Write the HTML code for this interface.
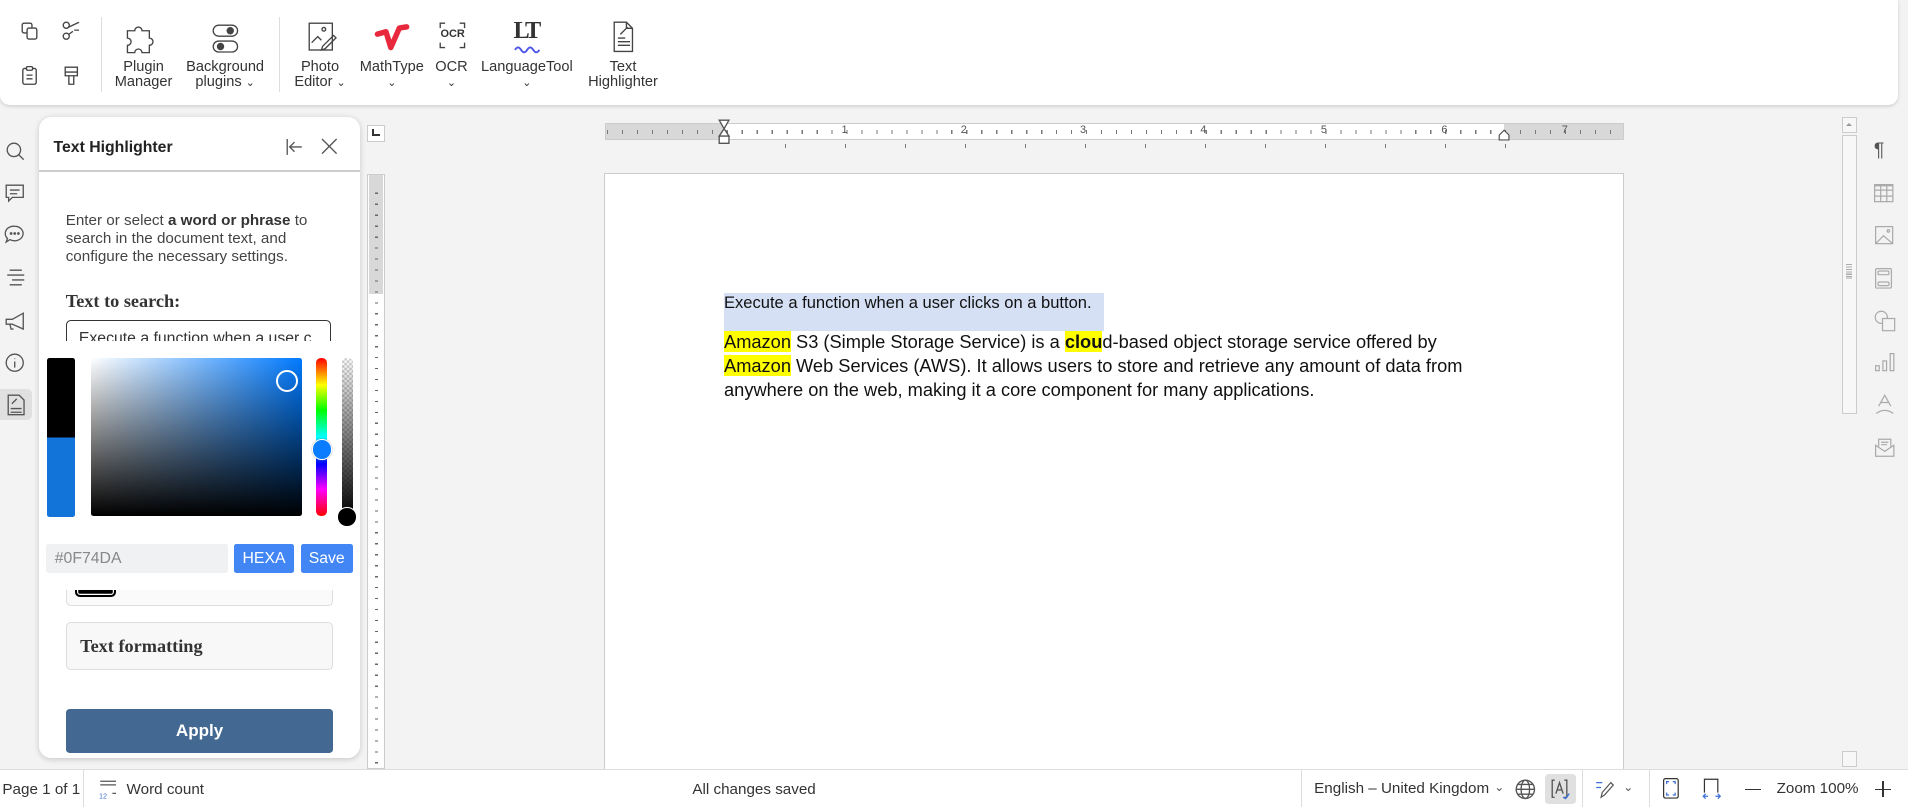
<!DOCTYPE html>
<html><head><meta charset="utf-8"><style>
*{box-sizing:border-box;margin:0;padding:0}
html,body{width:1908px;height:807px;overflow:hidden;background:#f3f3f3}
#r{zoom:1.21684;width:1568px;height:663px;position:relative;font-family:"Liberation Sans",Arial,sans-serif;color:#222;overflow:hidden}
.a{position:absolute}
.tb{left:0;top:0;width:1560px;height:86px;background:#fff;border-radius:0 0 8px 8px;box-shadow:0 1px 3px rgba(0,0,0,.15)}
.lbl{position:absolute;font-size:12px;line-height:13px;text-align:center;color:#333;white-space:nowrap;transform:translateX(-50%)}
.sep{position:absolute;width:1px;background:#ddd}
svg{position:absolute;overflow:visible}
.ic{fill:none;stroke:#444;stroke-width:1.1}
.ri{fill:none;stroke:#aaa;stroke-width:1}
.li{fill:none;stroke:#555;stroke-width:1.1}
.rn{position:absolute;top:102px;font-size:9px;color:#555;transform:translateX(-50%)}
</style></head><body><div id="r">
<div class="a tb"></div>
<svg style="left:17px;top:18px" width="16" height="16" class="ic"><rect x="1" y="1" width="8" height="8" rx="1.5"/><rect x="5" y="5" width="8" height="9" rx="1.5" fill="#fff"/></svg>
<svg style="left:51px;top:17px" width="16" height="16" class="ic"><circle cx="3.5" cy="3.5" r="2.5"/><circle cx="3.5" cy="12.5" r="2.5"/><path d="M5.5 5 L14 1 M5.5 11 L9 8.5 M10 7.5 L14 7.5"/></svg>
<svg style="left:17px;top:54px" width="16" height="16" class="ic"><rect x="1.5" y="2" width="11" height="13" rx="1.5"/><rect x="4.5" y="0.5" width="5" height="3" rx="1" fill="#fff"/><path d="M4.5 7.5h5M4.5 10.5h5"/></svg>
<svg style="left:53px;top:54px" width="14" height="16" class="ic"><path d="M1 1h10v7H1z M1 5h10 M4 8v7h4V8"/></svg>
<div class="sep" style="left:83px;top:14px;height:62px"></div>
<svg style="left:103px;top:17px" width="30" height="30" class="ic" stroke-width="1.1"><path d="M2 8h6a3 3 0 1 1 6 0h6v6a3 3 0 1 1 0 6v6h-6a3 3 0 1 0-6 0H2v-6a3 3 0 1 0 0-6z"/></svg>
<div class="lbl" style="left:118px;top:47px;top:49px">Plugin<br>Manager</div>
<svg style="left:174px;top:20px" width="24" height="26" class="ic"><rect x="1" y="1" width="20" height="9" rx="4.5"/><rect x="1" y="14" width="20" height="9" rx="4.5"/><circle cx="15" cy="5.5" r="2.5" fill="#444"/><circle cx="7" cy="18.5" r="2.5" fill="#444"/></svg>
<div class="lbl" style="left:185px;top:49px">Background<br>plugins <span style="font-size:9px">⌄</span></div>
<div class="sep" style="left:229px;top:14px;height:62px"></div>
<svg style="left:253px;top:18px" width="24" height="26" class="ic"><rect x="1" y="1" width="19" height="22"/><circle cx="13" cy="6" r="1.5"/><path d="M3 17l5-5 3 3M12 20l9-9 2 2-9 9-3 1z"/></svg>
<div class="lbl" style="left:263px;top:49px">Photo<br>Editor <span style="font-size:9px">⌄</span></div>
<svg style="left:308px;top:18px" width="28" height="26"><path d="M2 10 L9 8 L13 21 L20 5 L26 4" fill="none" stroke="#e8283c" stroke-width="4.5" stroke-linejoin="round" stroke-linecap="round"/></svg>
<div class="lbl" style="left:322px;top:49px">MathType<br><span style="font-size:9px">⌄</span></div>
<svg style="left:361px;top:18px" width="22" height="22" class="ic" stroke-width="1.6"><path d="M1 5V1h4M17 1h4v4M21 17v4h-4M5 21H1v-4"/></svg>
<div class="a" style="left:362px;top:23px;font-size:9px;font-weight:bold;color:#333">OCR</div>
<div class="lbl" style="left:371px;top:49px">OCR<br><span style="font-size:9px">⌄</span></div>
<div class="a" style="left:422px;top:14px;font-size:20px;font-weight:bold;font-family:'Liberation Serif',serif;color:#333;letter-spacing:-2px">LT</div>
<svg style="left:423px;top:37px" width="20" height="6"><path d="M0 4 Q2.5 0 5 4 T10 4 T15 4 T20 4" fill="none" stroke="#4c56e8" stroke-width="1.6"/></svg>
<div class="lbl" style="left:433px;top:49px">LanguageTool<br><span style="font-size:9px">⌄</span></div>
<svg style="left:504px;top:17px" width="18" height="26" class="ic"><path d="M1 1h10l5 5v19H1z M11 1v5h5 M4 17h10M4 20h10M4 14h6M6 11l6-6"/></svg>
<div class="lbl" style="left:512px;top:49px">Text<br>Highlighter</div>

<svg style="left:5px;top:117px" width="16" height="16" class="li"><circle cx="6.5" cy="6.5" r="5.5"/><path d="M10.5 10.5l4 4"/></svg>
<svg style="left:4px;top:151px" width="16" height="16" class="li"><path d="M1 1h14v10H6l-3 3v-3H1z M4 5h8M4 8h6"/></svg>
<svg style="left:4px;top:185px" width="16" height="16" class="li"><path d="M8 1a7 6 0 1 1-4 11l-3 2 1-3A7 6 0 0 1 8 1z"/><circle cx="5" cy="7" r=".6"/><circle cx="8" cy="7" r=".6"/><circle cx="11" cy="7" r=".6"/></svg>
<svg style="left:5px;top:221px" width="16" height="16" class="li"><path d="M3 1h10M1 5h14M5 9h10M3 13h10"/></svg>
<svg style="left:4px;top:256px" width="18" height="16" class="li"><path d="M1 6h5l9-5v13L6 10H1z M4 10l1 4h2"/></svg>
<svg style="left:4px;top:290px" width="16" height="16" class="li"><circle cx="8" cy="8" r="7"/><path d="M8 7v5M8 4.5v.5"/></svg>
<div class="a" style="left:0;top:320px;width:26px;height:25px;background:#e0e0e0;border-radius:0 4px 4px 0"></div>
<svg style="left:6px;top:324px" width="16" height="18" class="li"><path d="M1 1h9l4 4v12H1z M3 12h9M3 15h9M4 8l4-4"/></svg>

<div class="a" style="left:32px;top:96px;width:264px;height:527px;background:#fff;border-radius:10px;box-shadow:0 1px 5px rgba(0,0,0,.18)"></div>
<div class="a" style="left:44px;top:114px;font-size:13px;font-weight:bold;color:#222">Text Highlighter</div>
<svg style="left:235px;top:114px" width="14" height="13" class="li"><path d="M1 0v13M13 6.5H3M7 2.5l-4 4 4 4"/></svg>
<svg style="left:265px;top:114px" width="12" height="12" class="li"><path d="M0 0l12 12M12 0L0 12"/></svg>
<div class="a" style="left:32px;top:140px;width:264px;height:1px;background:#ccc"></div>
<div class="a" style="left:54px;top:174px;width:225px;font-size:12.5px;line-height:15px;color:#444">Enter or select <b style="color:#333">a word or phrase</b> to search in the document text, and configure the necessary settings.</div>
<div class="a" style="left:54px;top:239px;font-size:15px;font-weight:bold;font-family:'Liberation Serif',serif;color:#333">Text to search:</div>
<div class="a" style="left:54px;top:263px;width:218px;height:30px;border:1.5px solid #333;border-radius:4px;overflow:hidden;font-size:13px;padding:7px 10px;white-space:nowrap;color:#333">Execute a function when a user c</div>
<div class="a" style="left:54px;top:470px;width:220px;height:28px;border:1px solid #ddd;border-radius:4px;background:#fafafa"></div>
<div class="a" style="left:62px;top:474px;width:33px;height:17px;border:2px solid #000;border-radius:4px;background:#000;box-shadow:inset 0 0 0 1px #fff"></div>
<div class="a" style="left:54px;top:511px;width:220px;height:40px;border:1px solid #ddd;border-radius:4px;background:#f8f8f8;font-family:'Liberation Serif',serif;font-weight:bold;font-size:15px;color:#333;padding:11px 11px">Text formatting</div>
<div class="a" style="left:54px;top:583px;width:220px;height:36px;border-radius:3px;background:#436891;color:#fff;font-weight:bold;font-size:14px;text-align:center;line-height:36px">Apply</div>
<div class="a" style="left:32px;top:280px;width:264px;height:205px;background:#fff"></div>
<div class="a" style="left:39px;top:294px;width:23px;height:131px;border-radius:2px;overflow:hidden;background:linear-gradient(#000 0 50%,#1274d8 50%)"></div>
<div class="a" style="left:75px;top:294px;width:173px;height:130px;border-radius:2px;background:linear-gradient(to top,#000,rgba(0,0,0,0)),linear-gradient(to right,#fff,#007aff)"></div>
<div class="a" style="left:227px;top:304px;width:18px;height:18px;border:2px solid #fff;border-radius:50%"></div>
<div class="a" style="left:260px;top:294px;width:9px;height:130px;border-radius:4px;background:linear-gradient(#f00,#ff0 17%,#0f0 33%,#0ff 50%,#00f 67%,#f0f 83%,#f00)"></div>
<div class="a" style="left:256px;top:361px;width:17px;height:17px;border-radius:50%;background:#0a7cff;border:1.5px solid #fff;box-shadow:0 0 1px #888"></div>
<div class="a" style="left:281px;top:294px;width:9px;height:131px;border-radius:4px;background:linear-gradient(rgba(0,0,0,0),#000),repeating-conic-gradient(#ccc 0 25%,#fff 0 50%) 0 0/4px 4px"></div>
<div class="a" style="left:277px;top:417px;width:16px;height:16px;border-radius:50%;background:#000;border:1.5px solid #fff"></div>
<div class="a" style="left:38px;top:447px;width:149px;height:24px;background:#f0f1f3;border-radius:2px;font-size:13px;color:#888;padding:5px 7px">#0F74DA</div>
<div class="a" style="left:192px;top:447px;width:50px;height:24px;background:#4285f4;border-radius:2px;color:#fff;font-size:13px;text-align:center;line-height:24px">HEXA</div>
<div class="a" style="left:247px;top:447px;width:43px;height:24px;background:#4285f4;border-radius:2px;color:#fff;font-size:13px;text-align:center;line-height:24px">Save</div>

<div class="a" style="left:302px;top:103px;width:14px;height:14px;border:1px solid #ccc;background:#fff"></div>
<div class="a" style="left:306px;top:106px;width:6px;height:6px;border-left:2px solid #333;border-bottom:2px solid #333"></div>
<div class="a" style="left:302px;top:143px;width:14px;height:489px;background:#fff;border:1px solid #ccc"></div>
<div class="a" style="left:303px;top:144px;width:12px;height:98px;background:#d8d8d8"></div>
<div class="a" style="left:308px;top:150px;width:3px;height:480px;background:repeating-linear-gradient(transparent 0 8px,#666 8px 9px)"></div>
<div class="a" style="left:497px;top:101px;width:838px;height:14px;background:#d8d8d8;border:1px solid #ccc"></div>
<div class="a" style="left:595px;top:102px;width:641px;height:12px;background:#fff"></div>
<div class="a" style="left:499px;top:107px;width:834px;height:3px;background:repeating-linear-gradient(to right,#777 0 1px,transparent 1px 12.3px)"></div>
<div class="rn" style="left:694px">1</div><div class="rn" style="left:792px">2</div><div class="rn" style="left:890px">3</div><div class="rn" style="left:989px">4</div><div class="rn" style="left:1088px">5</div><div class="rn" style="left:1187px">6</div><div class="rn" style="left:1286px">7</div>
<svg style="left:590px;top:98px" width="12" height="22" class="li" stroke="#555"><path d="M1 1h8L5 8zM5 8L1 14h8zM1 14h8v6H1z" fill="#fff"/></svg>
<svg style="left:1231px;top:106px" width="10" height="10"><path d="M1 9V5l4-4 4 4v4z" fill="#fff" stroke="#555"/></svg>
<div class="a" style="left:645px;top:118px;width:640px;height:4px;background:repeating-linear-gradient(to right,#777 0 1px,transparent 1px 49.3px)"></div>

<div class="a" style="left:496px;top:142px;width:839px;height:500px;background:#fff;border:1px solid #ccc"></div>
<div class="a" style="left:595px;top:241px;width:312px;height:31px;background:#d5e0f5"></div>
<div class="a" style="left:595px;top:241px;font-size:13.6px;line-height:16px;color:#111;white-space:nowrap">Execute a function when a user clicks on a button.</div>
<div class="a" style="left:595px;top:271px;width:680px;font-size:15px;line-height:20px;color:#111;white-space:nowrap"><span style="background:#ff0">Amazon</span> S3 (Simple Storage Service) is a <b style="background:#ff0">clou</b>d-based object storage service offered by<br><span style="background:#ff0">Amazon</span> Web Services (AWS). It allows users to store and retrieve any amount of data from<br>anywhere on the web, making it a core component for many applications.</div>

<div class="a" style="left:1514px;top:96px;width:12px;height:13px;border:1px solid #ccc;background:#f7f7f7"></div>
<div class="a" style="left:1517px;top:101px;border:3px solid transparent;border-bottom:3px solid #999;border-top:0"></div>
<div class="a" style="left:1514px;top:111px;width:12px;height:229px;border:1px solid #ccc;background:#f7f7f7"></div>
<div class="a" style="left:1517px;top:217px;width:5px;height:12px;background:repeating-linear-gradient(#aaa 0 1px,transparent 1px 2px)"></div>
<div class="a" style="left:1514px;top:617px;width:12px;height:13px;border:1px solid #ccc;background:#f7f7f7"></div>
<div class="a" style="left:1540px;top:114px;font-size:16px;color:#555">¶</div>
<svg style="left:1540px;top:151px" width="16" height="15" class="ri"><rect x=".5" y=".5" width="15" height="14"/><path d="M.5 5h15M.5 10h15M5.5 1v14M10.5 1v14"/><path d="M.5 1h15" stroke-width="2"/></svg>
<svg style="left:1541px;top:186px" width="16" height="15" class="ri"><rect x=".5" y=".5" width="14" height="14"/><path d="M1 14l6-6 7 6"/><circle cx="11" cy="4" r="1"/></svg>
<svg style="left:1541px;top:220px" width="16" height="17" class="ri"><rect x=".5" y=".5" width="13" height="16" rx="1"/><rect x="2.5" y="2.5" width="9" height="3" rx="1"/><rect x="2.5" y="11.5" width="9" height="3" rx="1"/></svg>
<svg style="left:1540px;top:255px" width="18" height="18" class="ri"><circle cx="6" cy="6" r="5"/><rect x="7" y="7" width="10" height="10" fill="#f3f3f3"/></svg>
<svg style="left:1541px;top:290px" width="16" height="16" class="ri"><rect x=".5" y="10.5" width="3" height="4"/><rect x="6.5" y="6.5" width="3" height="8"/><rect x="12.5" y=".5" width="3" height="14"/></svg>
<svg style="left:1541px;top:324px" width="16" height="18" class="ri"><path d="M3 10L8 1l5 9M5 7h6M1 16q7-5 14 0"/></svg>
<svg style="left:1541px;top:360px" width="16" height="16" class="ri"><path d="M.5 6l7.5 5 7.5-5v9H.5zM3 7V1h10v6M5 3.5h6M5 5.5h5"/></svg>

<div class="a" style="left:0;top:632px;width:1568px;height:31px;background:#fff;border-top:1px solid #ddd"></div>
<div class="a" style="left:2px;top:642px;font-size:12.5px;color:#333">Page 1 of 1</div>
<div class="sep" style="left:68px;top:633px;height:30px"></div>
<svg style="left:81px;top:641px" width="16" height="16"><path d="M1 1h13M1 4h13M11 11h3" stroke="#555" fill="none"/><text x="0" y="15" font-size="6" fill="#3a6fd8" font-family="Liberation Sans">12</text></svg>
<div class="a" style="left:104px;top:642px;font-size:12.5px;color:#333">Word count</div>
<div class="a" style="left:569px;top:642px;font-size:12.5px;color:#333">All changes saved</div>
<div class="sep" style="left:1069px;top:633px;height:30px"></div>
<div class="a" style="left:1080px;top:641px;font-size:12.5px;color:#333">English – United Kingdom</div>
<div class="a" style="left:1228px;top:641px;font-size:10px;color:#555">⌄</div>
<svg style="left:1245px;top:640px" width="17" height="17" class="li"><circle cx="8.5" cy="8.5" r="7.5"/><ellipse cx="8.5" cy="8.5" rx="3.5" ry="7.5"/><path d="M1 8.5h15M2.5 4.5h12M2.5 12.5h12"/></svg>
<div class="a" style="left:1270px;top:636px;width:25px;height:25px;background:#e0e0e0;border-radius:3px"></div>
<svg style="left:1275px;top:640px" width="16" height="17" class="li"><path d="M3 1H1v14h2M11 1h2v14h-2M4 12l3-9 3 9M5 9h4"/><path d="M10 15l2 1 3-4" stroke="#3a6fd8"/></svg>
<div class="sep" style="left:1300px;top:633px;height:30px"></div>
<svg style="left:1311px;top:640px" width="18" height="16" fill="none"><path d="M1 3h5M1 7h4" stroke="#3a6fd8"/><path d="M5 15l1-4 7-8 2 2-7 8z" stroke="#555"/></svg>
<div class="a" style="left:1334px;top:641px;font-size:10px;color:#555">⌄</div>
<div class="sep" style="left:1355px;top:633px;height:30px"></div>
<svg style="left:1367px;top:639px" width="14" height="18" fill="none"><rect x=".5" y=".5" width="12" height="16" rx="1.5" stroke="#333"/><path d="M3 5V3h2M8 3h2v2M10 12v2H8M5 14H3v-2" stroke="#3a6fd8"/></svg>
<svg style="left:1399px;top:639px" width="16" height="18" fill="none"><path d="M2 12V1h11v11" stroke="#333"/><path d="M1 15h4M11 15h4M3 13l-2 2 2 2M13 13l2 2-2 2" stroke="#3a6fd8"/></svg>
<div class="a" style="left:1434px;top:648px;width:13px;height:1px;background:#333"></div>
<div class="a" style="left:1460px;top:641px;font-size:12.5px;color:#333">Zoom 100%</div>
<div class="a" style="left:1541px;top:648px;width:13px;height:1px;background:#333"></div>
<div class="a" style="left:1547px;top:642px;width:1px;height:13px;background:#333"></div>
</div></body></html>
